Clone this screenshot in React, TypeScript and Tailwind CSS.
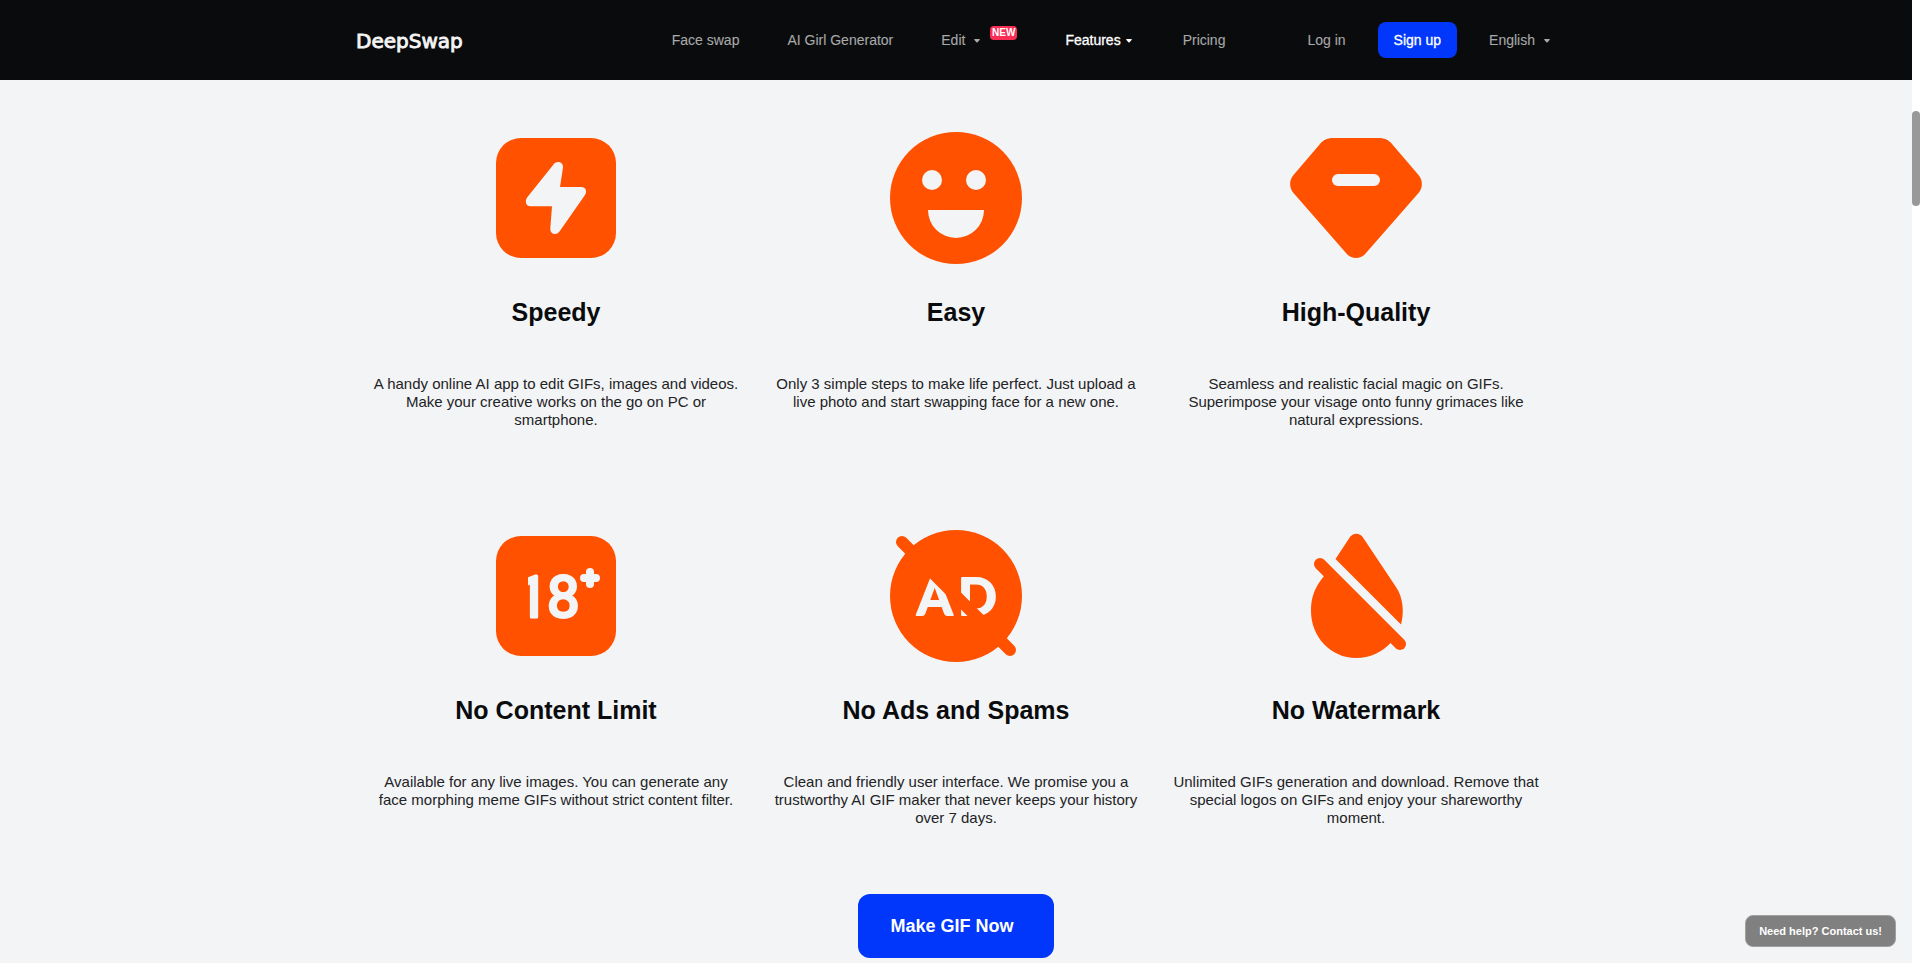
import type { ReactNode } from 'react';

const ORANGE = '#ff5100';
const PAPER = '#f3f4f6';

type Feature = {
  title: string;
  text: string;
  icon: ReactNode;
};

function Icon({ children }: { children: ReactNode }) {
  return (
    <svg className="size-36" viewBox="-72 -72 144 144" fill={ORANGE} aria-hidden="true">
      {children}
    </svg>
  );
}

function Caret() {
  return (
    <svg className="size-3" viewBox="0 0 12 12" fill="currentColor" aria-hidden="true">
      <path d="M4 5h4c.7 0 1 .6.6 1.100L6.600 8.300c-.3.4-.9.4-1.200 0L3.400 6.100C3 5.600 3.300 5 4 5z" />
    </svg>
  );
}

const features: Feature[] = [
  {
    title: 'Speedy',
    text: 'A handy online AI app to edit GIFs, images and videos. Make your creative works on the go on PC or smartphone.',
    icon: (
      <Icon>
        <rect x="-60" y="-60" width="120" height="120" rx="25" />
        <path
          fill={PAPER}
          d="M-2.500 -33.500C1 -38 7.500 -36 7 -30.500L4 -11H25.500C29.500 -11 31.500 -7 29 -3L3.500 33.500C0 38 -6 36 -5.700 30.500L-4 8.300H-25.500C-30 8.300 -31.700 3 -28.500 -1Z"
        />
      </Icon>
    ),
  },
  {
    title: 'Easy',
    text: 'Only 3 simple steps to make life perfect. Just upload a live photo and start swapping face for a new one.',
    icon: (
      <Icon>
        <circle r="66" />
        <circle cx="-24" cy="-18" r="10" fill={PAPER} />
        <circle cx="20" cy="-18" r="10" fill={PAPER} />
        <path d="M-28 12H28A28 28 0 0 1 -28 12Z" fill={PAPER} />
      </Icon>
    ),
  },
  {
    title: 'High-Quality',
    text: 'Seamless and realistic facial magic on GIFs. Superimpose your visage onto funny grimaces like natural expressions.',
    icon: (
      <Icon>
        <path d="M-23 -60H23C28 -60 33 -58 36 -54L62.500 -23C67 -18 67 -10 62.500 -5L10 55C5 61.500 -5 61.500 -10 55L-62.500 -5C-67 -10 -67 -18 -62.500 -23L-36 -54C-33 -58 -28 -60 -23 -60Z" />
        <rect x="-24" y="-24" width="48" height="12" rx="6" fill={PAPER} />
      </Icon>
    ),
  },
  {
    title: 'No Content Limit',
    text: 'Available for any live images. You can generate any face morphing meme GIFs without strict content filter.',
    icon: (
      <Icon>
        <rect x="-60" y="-60" width="120" height="120" rx="25" />
        <text
          x="-40 -9"
          y="21"
          fontSize="58"
          fontWeight="400"
          fill={PAPER}
          stroke={PAPER}
          strokeWidth="3"
          strokeLinejoin="round"
          className="font-['Roboto',sans-serif]"
        >
          18
        </text>
        {/* trims the flag of the 1 */}
        <rect x="-44" y="-24" width="16" height="22" />
        <path d="M34 -24V-12M28 -18H40" stroke={PAPER} strokeWidth="8" strokeLinecap="round" />
      </Icon>
    ),
  },
  {
    title: 'No Ads and Spams',
    text: 'Clean and friendly user interface. We promise you a trustworthy AI GIF maker that never keeps your history over 7 days.',
    icon: (
      <Icon>
        <circle r="66" />
        <text
          x="-39 2"
          y="19"
          fontSize="51"
          fontWeight="700"
          fill={PAPER}
          stroke={PAPER}
          strokeWidth="2"
          strokeLinejoin="round"
          className="font-['Lato',sans-serif]"
        >
          AD
        </text>
        <path d="M-54 -54L54 54" stroke={ORANGE} strokeWidth="12" strokeLinecap="round" />
      </Icon>
    ),
  },
  {
    title: 'No Watermark',
    text: 'Unlimited GIFs generation and download. Remove that special logos on GIFs and enjoy your shareworthy moment.',
    icon: (
      <Icon>
        <path d="M-20.500 -37L-7 -57.500C-3.500 -63.500 3.500 -63.500 7 -58.500L40 -9C47 1 48.500 16 45 28.500Z" />
        <path d="M-32 -20C-42 -8 -45 2 -45 15C-45 41 -25 62 0 62C14 62 26 56 34.500 47L30 34L-32 -28Z" />
        <path d="M-36 -32L44 48" stroke={ORANGE} strokeWidth="12" strokeLinecap="round" />
      </Icon>
    ),
  },
];

function Header() {
  return (
    <header className="bg-[#0a0b0d] text-sm text-white/65">
      <div className="mx-auto flex h-20 max-w-[1200px] items-center">
        <a href="#" aria-label="DeepSwap">
          <svg className="h-8 w-28" viewBox="0 0 112 32" fill="#f4f4f4">
            <text
              x="0"
              y="24"
              fontSize="20"
              stroke="#f4f4f4"
              strokeWidth="0.9"
              className="font-['DejaVu_Sans',sans-serif]"
            >
              DeepSwap
            </text>
          </svg>
        </a>
        <nav className="mr-[82px] ml-auto flex items-center gap-12">
          <a href="#">Face swap</a>
          <a href="#">AI Girl Generator</a>
          <button className="relative flex items-center gap-1.5 pr-[34px]">
            Edit
            <Caret />
            <span className="absolute -top-1 right-0 rounded bg-[#fa2d55] px-0.5 text-[10px] leading-[14px] font-bold text-white">
              NEW
            </span>
          </button>
          <button className="flex items-center gap-0.5 text-white [-webkit-text-stroke:0.3px]">
            Features
            <Caret />
          </button>
          <a href="#">Pricing</a>
        </nav>
        <div className="flex items-center gap-8">
          <a href="#">Log in</a>
          <button className="h-9 rounded-lg bg-[#0037fa] px-4 text-white [-webkit-text-stroke:0.3px]">Sign up</button>
          <button className="flex items-center gap-1.5 pr-[3px]">
            English
            <Caret />
          </button>
        </div>
      </div>
    </header>
  );
}

export default function App() {
  return (
    <div className="flex h-screen overflow-hidden bg-white font-['Liberation_Sans',Arial,sans-serif]">
      <div className="flex-1 bg-gray-100">
        <Header />
        <main className="mx-auto flex max-w-[1200px] flex-col items-center pt-[46px]">
          <div className="grid grid-cols-3 gap-y-[95px]">
            {features.map((feature) => (
              <section key={feature.title} className="flex flex-col items-center px-4 text-center text-[#0a0b0d]">
                {feature.icon}
                <h3 className="mt-7 text-[25px] leading-7 font-bold">{feature.title}</h3>
                <p className="mt-[49px] text-[15px] leading-[18px] text-[#222325]">{feature.text}</p>
              </section>
            ))}
          </div>
          <button className="mt-[67px] h-16 rounded-xl bg-[#0037fa] pr-10 pl-8 text-lg font-bold text-white">
            Make GIF Now
          </button>
        </main>
      </div>

      {/* scroll rail */}
      <div className="w-2 bg-white pt-[111px]">
        <div className="h-[95px] rounded-full bg-[#999]" />
      </div>

      <button className="fixed right-6 bottom-4 h-8 rounded-lg border border-[#a0a0a0] bg-[#808080] px-[13px] text-[11px] font-bold text-white">
        Need help? Contact us!
      </button>
    </div>
  );
}
